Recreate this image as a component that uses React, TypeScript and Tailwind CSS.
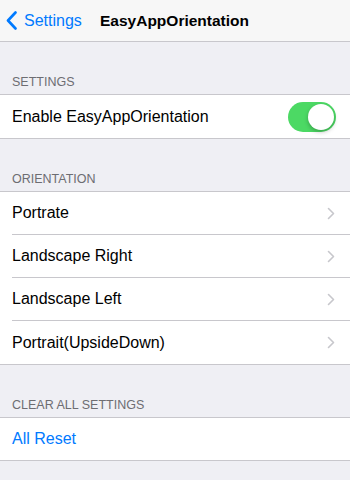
import { useState } from "react";

const font = { fontFamily: '"Liberation Sans", Arial, sans-serif' };

function Chevron() {
  return (
    <svg width="8" height="13" viewBox="0 0 8 13" className="shrink-0">
      <path d="M1.5 1.5 L6.5 6.5 L1.5 11.5" fill="none" stroke="#c7c7cc" strokeWidth="1.6" strokeLinecap="round" strokeLinejoin="round" />
    </svg>
  );
}

function SectionLabel({ text }: { text: string }) {
  return (
    <div className="h-[52px] flex items-end px-3 pb-[2px] text-[12.5px] text-[#6d6d72]">
      {text}
    </div>
  );
}

const orientations = ["Portrate", "Landscape Right", "Landscape Left", "Portrait(UpsideDown)"];

export default function App() {
  const [enabled, setEnabled] = useState(true);

  return (
    <div className="w-[350px] h-[480px] bg-[#efeff4] overflow-hidden" style={font}>
      {/* Nav bar */}
      <div className="h-[42px] bg-[#f7f7f7] border-b border-[#c8c7cc] flex items-center relative">
        <div className="flex items-center pl-[6px] text-[#007aff] text-[16px]">
          <svg width="11" height="19" viewBox="0 0 11 19" className="mr-[7px]">
            <path d="M9.5 1.5 L2 9.5 L9.5 17.5" fill="none" stroke="#007aff" strokeWidth="2.6" strokeLinecap="round" strokeLinejoin="round" />
          </svg>
          Settings
        </div>
        <div className="absolute left-[100px] text-[15.5px] font-bold text-black">EasyAppOrientation</div>
      </div>

      <SectionLabel text="SETTINGS" />
      <div className="bg-white border-y border-[#c8c7cc] h-[45px] flex items-center justify-between pl-3 pr-[14px]">
        <span className="text-[16px] text-black">Enable EasyAppOrientation</span>
        <button
          onClick={() => setEnabled(!enabled)}
          className={`w-[48px] h-[30px] rounded-full flex items-center p-[2px] ${enabled ? "bg-[#4cd964] justify-end" : "bg-[#e5e5ea] justify-start"}`}
        >
          <span className="w-[26px] h-[26px] rounded-full bg-white shadow-[0_2px_4px_rgba(0,0,0,0.25)]" />
        </button>
      </div>

      <SectionLabel text="ORIENTATION" />
      <div className="bg-white border-y border-[#c8c7cc]">
        {orientations.map((o, i) => (
          <div key={o} className="pl-3">
            <div
              className={`h-[43px] flex items-center justify-between pr-[15px] ${i < orientations.length - 1 ? "border-b border-[#c8c7cc]" : ""}`}
            >
              <span className="text-[16px] text-black">{o}</span>
              <Chevron />
            </div>
          </div>
        ))}
      </div>

      <SectionLabel text="CLEAR ALL SETTINGS" />
      <div className="bg-white border-y border-[#c8c7cc] h-[44px] flex items-center pl-3">
        <span className="text-[16px] text-[#007aff]">All Reset</span>
      </div>
    </div>
  );
}
